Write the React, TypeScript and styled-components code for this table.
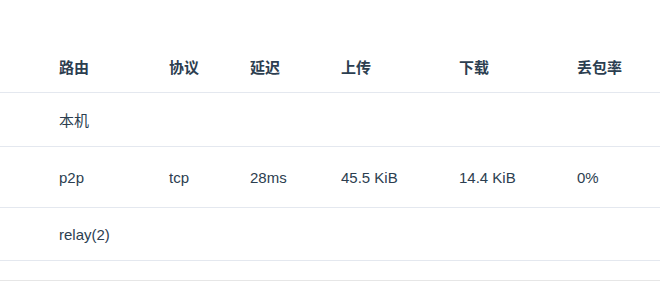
import styled, { createGlobalStyle } from "styled-components";

const GlobalStyle = createGlobalStyle`
  html, body {
    margin: 0;
    padding: 0;
    background: #fff;
  }
  body {
    font-family: "Liberation Sans", Arial, "Noto Sans CJK SC", sans-serif;
    color: #2c3e50;
  }
`;

const columns = ["路由", "协议", "延迟", "上传", "下载", "丢包率"];

const rows = [
  { cells: ["本机", "", "", "", "", ""], height: 53 },
  { cells: ["p2p", "tcp", "28ms", "45.5 KiB", "14.4 KiB", "0%"], height: 60 },
  { cells: ["relay(2)", "", "", "", "", ""], height: 52 },
];

const App = () => {
  return (
    <>
      <GlobalStyle />
      <Card>
        <Table>
          <HeadRow>
            {columns.map((c) => (
              <HeadCell key={c}>{c}</HeadCell>
            ))}
          </HeadRow>
          {rows.map((r, i) => (
            <Row key={i} $height={r.height}>
              {r.cells.map((c, j) => (
                <Cell key={j}>{c}</Cell>
              ))}
            </Row>
          ))}
        </Table>
        <Footer />
      </Card>
    </>
  );
};

export default App;

const Card = styled.div`
  width: 100%;
  padding-top: 40px;
  background: #fff;
  box-shadow: 0 2px 5px rgba(0, 0, 0, 0.1);
  border-bottom: 1px solid #e6e6e6;
`;

const Table = styled.div`
  width: 100%;
  display: flex;
  flex-direction: column;
`;

const HeadRow = styled.div`
  display: grid;
  grid-template-columns: 110px 81px 91px 118px 118px 1fr;
  align-items: center;
  padding-left: 59px;
  height: 52px;
  border-bottom: 1px solid #e4e8ef;
`;

const HeadCell = styled.div`
  font-family: "Noto Sans CJK SC", "Liberation Sans", sans-serif;
  font-size: 15px;
  font-weight: 700;
  color: #2c3e50;
`;

const Row = styled.div<{ $height: number }>`
  display: grid;
  grid-template-columns: 110px 81px 91px 118px 118px 1fr;
  align-items: center;
  padding-left: 59px;
  height: ${(p) => p.$height}px;
  border-bottom: 1px solid #e4e8ef;
`;

const Cell = styled.div`
  font-family: "Liberation Sans", Arial, "Noto Sans CJK SC", sans-serif;
  font-size: 15px;
  color: #2c3e50;
`;

const Footer = styled.div`
  height: 19px;
`;
